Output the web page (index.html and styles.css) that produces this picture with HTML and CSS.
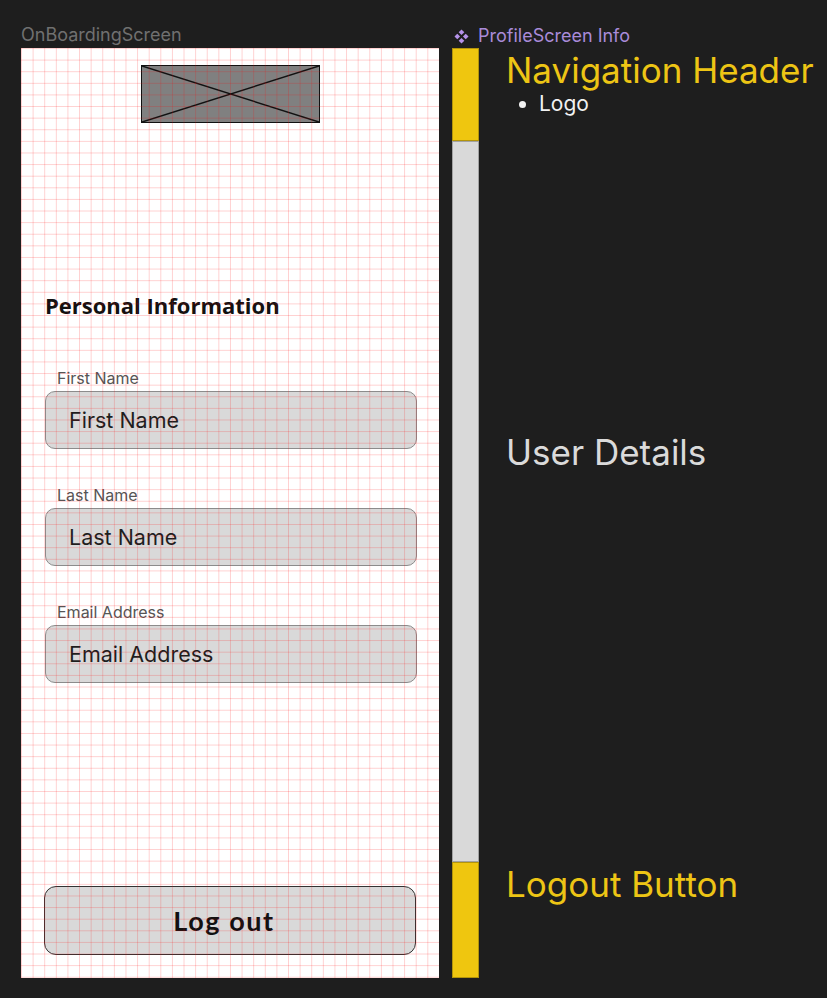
FILE: index.html
```html
<!DOCTYPE html>
<html lang="en">
<head>
    <meta charset="UTF-8">
    <meta name="viewport" content="width=device-width, initial-scale=1.0">
    <title>OnBoardingScreen</title>
    <link rel="stylesheet" href="styles.css">
</head>
<body>

    <div class="canvas">

        <!-- Ecran mobile -->
        <div class="screen-col">
            <div class="frame-label">OnBoardingScreen</div>
            <div class="frame">
                <div class="logo">
                    <svg viewBox="0 0 100 100" preserveAspectRatio="none">
                        <line x1="0" y1="0" x2="100" y2="100" vector-effect="non-scaling-stroke"></line>
                        <line x1="100" y1="0" x2="0" y2="100" vector-effect="non-scaling-stroke"></line>
                    </svg>
                </div>

                <h2 class="section-title">Personal Information</h2>

                <div class="field">
                    <label class="field-label" for="firstName">First Name</label>
                    <div class="field-input" id="firstName">First Name</div>
                </div>
                <div class="field">
                    <label class="field-label" for="lastName">Last Name</label>
                    <div class="field-input" id="lastName">Last Name</div>
                </div>
                <div class="field">
                    <label class="field-label" for="email">Email Address</label>
                    <div class="field-input" id="email">Email Address</div>
                </div>

                <button class="logout">Log out</button>
            </div>
        </div>

        <!-- Annotations -->
        <div class="info-col">
            <div class="info-label">
                <svg class="component-icon" viewBox="0 0 16 16">
                    <path d="M8 0.5 L11 3.5 L8 6.5 L5 3.5 Z"></path>
                    <path d="M3.5 5 L6.5 8 L3.5 11 L0.5 8 Z"></path>
                    <path d="M12.5 5 L15.5 8 L12.5 11 L9.5 8 Z"></path>
                    <path d="M8 9.5 L11 12.5 L8 15.5 L5 12.5 Z"></path>
                </svg>
                ProfileScreen Info
            </div>

            <div class="info-section sec-header">
                <div class="bar bar-yellow"></div>
                <div class="note">
                    <div class="note-title yellow">Navigation Header</div>
                    <ul class="note-list">
                        <li>Logo</li>
                    </ul>
                </div>
            </div>

            <div class="info-section sec-details">
                <div class="bar bar-grey"></div>
                <div class="note">
                    <div class="note-title grey">User Details</div>
                </div>
            </div>

            <div class="info-section sec-logout">
                <div class="bar bar-yellow"></div>
                <div class="note">
                    <div class="note-title yellow">Logout Button</div>
                </div>
            </div>
        </div>

    </div>

</body>
</html>
```

FILE: styles.css
```css
html, body {
    margin: 0;
    height: 998px;
    overflow: hidden;
}
body {
    background-color: #1e1e1e;
    font-family: Inter, "Noto Sans", sans-serif;
    padding: 24px 0 0 21px;
    box-sizing: border-box;
}
.canvas {
    display: flex;
    gap: 13px;
}

/* Colonne ecran */
.screen-col {
    width: 418px;
}
.frame-label {
    font-size: 18px;
    line-height: 22px;
    height: 24px;
    color: #707070;
}
.frame {
    position: relative;
    height: 930px;
    background-color: #ffffff;
    display: flex;
    flex-direction: column;
    padding: 0 22px 23px 24px;
    box-sizing: border-box;
}
.frame::after {
    content: "";
    position: absolute;
    inset: 0;
    pointer-events: none;
    background-image:
        linear-gradient(to right, rgba(255, 0, 0, 0.18) 1px, transparent 1px),
        linear-gradient(to bottom, rgba(255, 0, 0, 0.18) 1px, transparent 1px);
    background-size: 11.611px 11.611px;
}
.logo {
    align-self: center;
    width: 179px;
    height: 58px;
    margin-top: 17px;
    margin-left: -2px;
    background-color: #808080;
    border: 1px solid #111;
    box-sizing: border-box;
}
.logo svg {
    display: block;
    width: 100%;
    height: 100%;
}
.logo line {
    stroke: #111;
    stroke-width: 1.5;
}
.section-title {
    font-family: "Open Sans", sans-serif;
    font-weight: 700;
    font-size: 22px;
    line-height: 28px;
    color: #111;
    margin: 168px 0 0 0;
    letter-spacing: 0;
}
.field {
    display: flex;
    flex-direction: column;
    margin-top: 37.5px;
}
.section-title + .field {
    margin-top: 50.2px;
}
.field-label {
    font-size: 16px;
    line-height: 19px;
    color: #555;
    margin-left: 12px;
    margin-bottom: 2.5px;
}
.field-input {
    height: 58px;
    box-sizing: border-box;
    background-color: #d9d9d9;
    border: 1px solid #8c8c8c;
    border-radius: 10px;
    padding-left: 23px;
    display: flex;
    align-items: center;
    font-size: 21.5px;
    color: #1e1e1e;
}
.logout {
    margin-top: auto;
    margin-left: -1px;
    width: 372px;
    height: 69px;
    background-color: #d9d9d9;
    border: 1.5px solid #333;
    border-radius: 12px;
    font-family: Lato, sans-serif;
    font-weight: 700;
    font-size: 27px;
    color: #111;
    padding: 0 12px 0 0;
    letter-spacing: 1.6px;
}

/* Colonne annotations */
.info-col {
    flex: 1;
}
.info-label {
    display: flex;
    align-items: center;
    gap: 9px;
    font-size: 18px;
    line-height: 22px;
    height: 24px;
    color: #a98bd9;
    margin-left: 2px;
}
.component-icon {
    width: 15px;
    height: 15px;
    fill: #b592ea;
}
.info-section {
    display: flex;
}
.sec-header { height: 93px; }
.sec-details { height: 721px; }
.sec-logout { height: 116px; }
.bar {
    width: 27px;
    box-sizing: border-box;
    border: 1px solid rgba(0, 0, 0, 0.25);
}
.bar-yellow { background-color: #efc60f; }
.bar-grey { background-color: #d9d9d9; }
.note {
    padding-left: 27px;
}
.note-title {
    font-size: 35px;
    line-height: 40px;
}
.yellow { color: #edc515; }
.grey { color: #dadada; }
.sec-header .note { padding-top: 2px; }
.sec-details .note { padding-top: 291px; }
.sec-logout .note { padding-top: 2px; }
.note-list {
    margin: 2px 0 0 0;
    padding-left: 33px;
    font-size: 21px;
    line-height: 24px;
    color: #f2f2f2;
}
```
